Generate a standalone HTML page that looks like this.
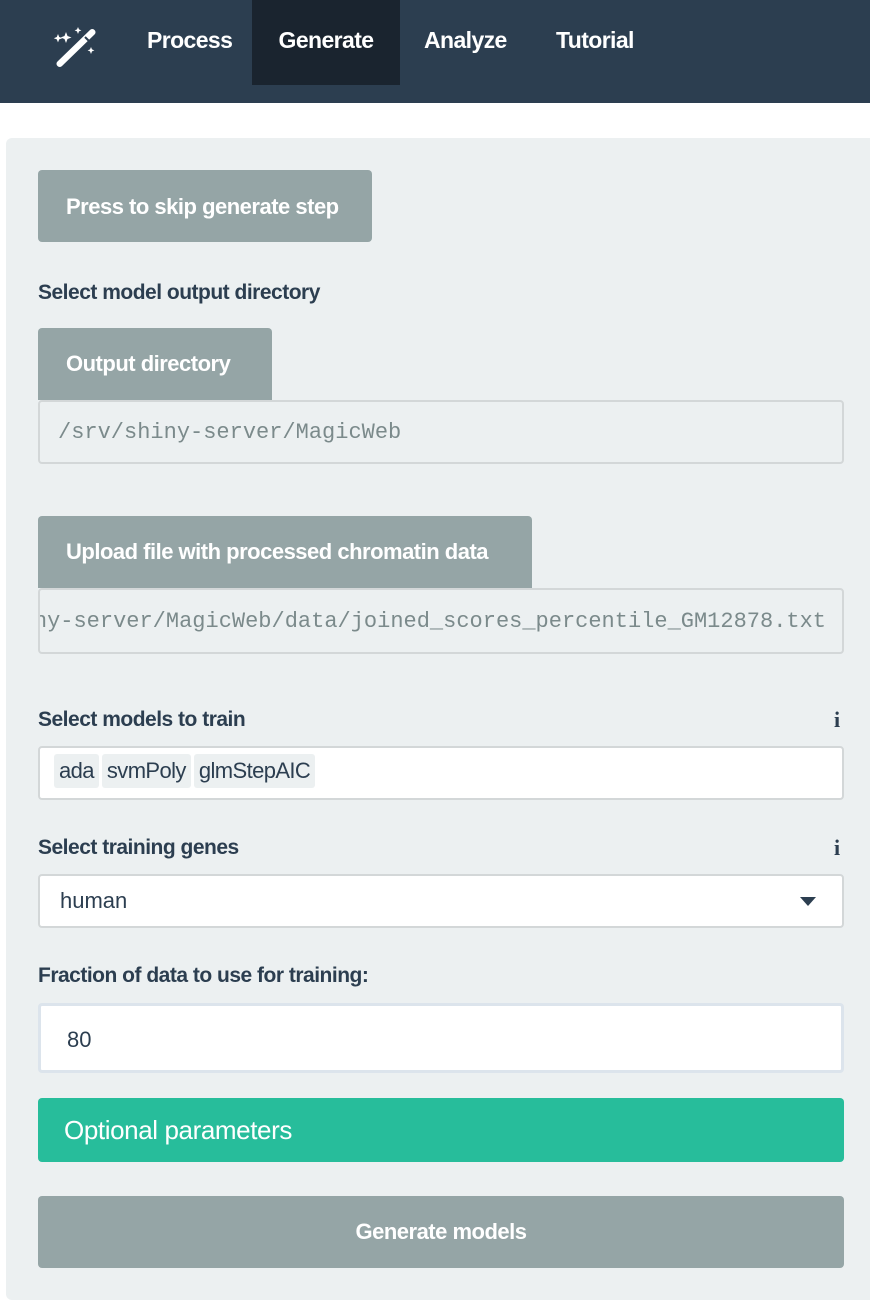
<!DOCTYPE html>
<html><head><meta charset="utf-8"><style>
*{box-sizing:border-box;margin:0;padding:0}
body{width:870px;height:1300px;background:#fff;font-family:"Liberation Sans",sans-serif;color:#2c3e50;position:relative;overflow:hidden}
.nav{position:absolute;left:0;top:0;width:870px;height:103px;background:#2c3e50}
.nav a{position:absolute;top:0;height:85px;line-height:80px;color:#fff;font-size:23px;font-weight:bold;letter-spacing:-0.6px}
.act{background:#1a242f}
.panel{position:absolute;left:6px;top:138px;width:880px;height:1162px;background:#ecf0f1;border-radius:6px}
.btn{position:absolute;background:#95a5a6;color:#fff;border-radius:4px;font-size:22px;font-weight:bold;letter-spacing:-0.5px;padding-left:28px}
.lbl{position:absolute;left:38px;font-size:21px;font-weight:bold;letter-spacing:-0.5px}
.inp{position:absolute;left:38px;width:806px;border:2px solid #d3d7d8;border-radius:4px;background:#fff}
.ro{background:#ecf0f1;font-family:"Liberation Mono",monospace;color:#7b8a8b;font-size:22px;overflow:hidden;white-space:nowrap}
.info{position:absolute;left:834px;font-size:22px;font-weight:bold;font-family:"Liberation Serif",serif}
.tag{display:inline-block;background:#ecf0f1;border-radius:3px;padding:0 5px;height:34px;line-height:34px;margin-right:3px}
</style></head><body>
<div class="nav">
<svg style="position:absolute;left:52px;top:24px" width="48" height="46" viewBox="0 0 48 46">
<g fill="#fff">
<path d="M6 20l1.2 3 3 1.2-3 1.2L6 28.4l-1.2-3-3-1.2 3-1.2z" transform="translate(0,-10)"/>
<path d="M17 10l1.5 4 4 1.5-4 1.5L17 21l-1.5-4-4-1.5 4-1.5z" transform="translate(-3,-2)"/>
<path d="M24 4l1 2.4 2.4 1-2.4 1L24 11l-1-2.6-2.4-1 2.4-1z" transform="translate(2,-1)"/>
<path d="M43 17l1 2.4 2.4 1-2.4 1L43 24l-1-2.6-2.4-1 2.4-1z" transform="translate(-4,6)"/>
<path d="M38 6a3 3 0 0 1 4.5 0a3 3 0 0 1 0 4.5L10 42a3 3 0 0 1-4.5 0a3 3 0 0 1 0-4.5z"/>
</g>
<path d="M33 13l4 4" stroke="#2c3e50" stroke-width="2"/>
</svg>
<a style="left:147px">Process</a>
<a class="act" style="left:252px;width:148px;text-align:center">Generate</a>
<a style="left:424px">Analyze</a>
<a style="left:556px">Tutorial</a>
</div>
<div class="panel"></div>
<div class="btn" style="left:38px;top:170px;width:334px;height:72px;line-height:74px">Press to skip generate step</div>
<div class="lbl" style="top:281px">Select model output directory</div>
<div class="btn" style="left:38px;top:328px;width:234px;height:72px;line-height:72px;border-radius:4px 4px 0 0">Output directory</div>
<div class="inp ro" style="top:400px;height:64px;line-height:62px;padding-left:18px">/srv/shiny-server/MagicWeb</div>
<div class="btn" style="left:38px;top:516px;width:494px;height:72px;line-height:72px;border-radius:4px 4px 0 0">Upload file with processed chromatin data</div>
<div class="inp ro" style="top:588px;height:66px;line-height:64px"><span style="position:absolute;right:16px;top:0">/srv/shiny-server/MagicWeb/data/joined_scores_percentile_GM12878.txt</span></div>
<div class="lbl" style="top:708px">Select models to train</div>
<div class="info" style="top:707px">i</div>
<div class="inp" style="top:746px;height:54px;padding:6px 0 0 14px;font-size:22px;letter-spacing:-0.6px"><span class="tag">ada</span><span class="tag">svmPoly</span><span class="tag">glmStepAIC</span></div>
<div class="lbl" style="top:836px">Select training genes</div>
<div class="info" style="top:835px">i</div>
<div class="inp" style="top:874px;height:54px;line-height:50px;padding-left:20px;font-size:22px">human
<svg style="position:absolute;right:26px;top:21px" width="16" height="10"><path d="M0 0h16L8 9z" fill="#2c3e50"/></svg></div>
<div class="lbl" style="top:964px">Fraction of data to use for training:</div>
<div class="inp" style="top:1003px;height:70px;line-height:68px;padding-left:26px;font-size:22px;border:3px solid #dce4ec">80</div>
<div style="position:absolute;left:38px;top:1098px;width:806px;height:64px;background:#27bd9b;border-radius:4px;color:#fff;font-size:26px;line-height:64px;padding-left:26px;letter-spacing:-0.4px">Optional parameters</div>
<div class="btn" style="left:38px;top:1196px;width:806px;height:72px;line-height:72px;padding:0;text-align:center">Generate models</div>
</body></html>
